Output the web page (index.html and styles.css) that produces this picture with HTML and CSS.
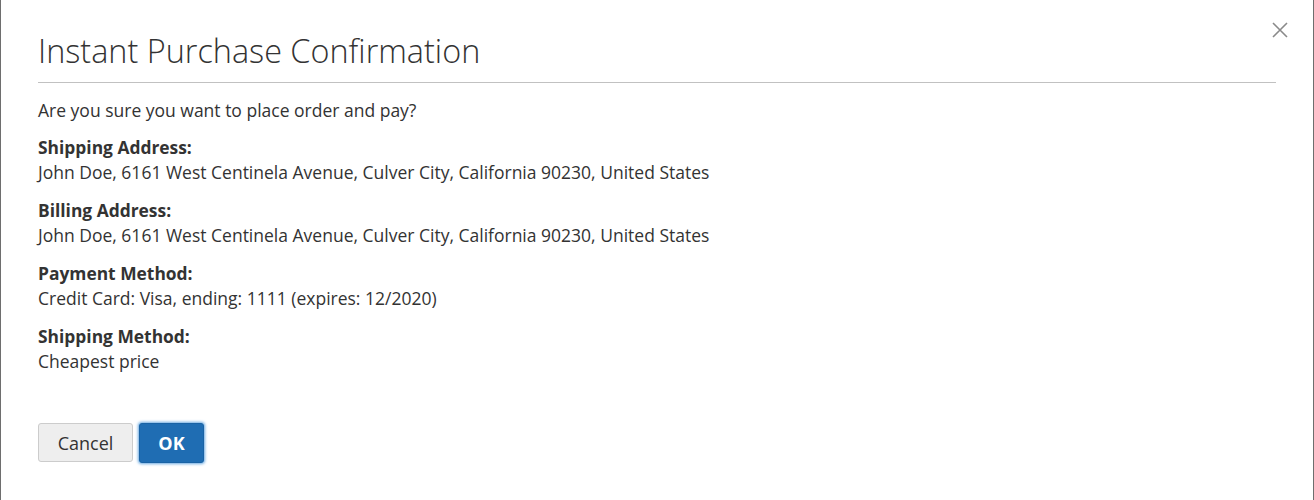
FILE: index.html
```html
<!DOCTYPE html>
<html>
<head>
<meta charset="utf-8">
<link rel="stylesheet" href="styles.css">
</head>
<body>
<div class="modal">
  <header class="modal-header">
    <h1 class="modal-title">Instant Purchase Confirmation</h1>
    <button class="close" aria-label="Close">
      <svg width="16" height="16" viewBox="0 0 16 16"><path d="M1 1L15 15M15 1L1 15" stroke="#8a8a8a" stroke-width="1.6" fill="none"/></svg>
    </button>
  </header>
  <div class="modal-content">
    <p class="intro">Are you sure you want to place order and pay?</p>
    <div class="item"><strong>Shipping Address:</strong><span>John Doe, 6161 West Centinela Avenue, Culver City, California 90230, United States</span></div>
    <div class="item"><strong>Billing Address:</strong><span>John Doe, 6161 West Centinela Avenue, Culver City, California 90230, United States</span></div>
    <div class="item"><strong>Payment Method:</strong><span>Credit Card: Visa, ending: 1111 (expires: 12/2020)</span></div>
    <div class="item"><strong>Shipping Method:</strong><span>Cheapest price</span></div>
  </div>
  <footer class="modal-footer">
    <button class="btn btn-secondary">Cancel</button>
    <button class="btn btn-primary">OK</button>
  </footer>
</div>
</body>
</html>
```
FILE: styles.css
```css
html, body {
  margin: 0;
  padding: 0;
  background: #fff;
}
body {
  font-family: "Open Sans", "Noto Sans", sans-serif;
  color: #333;
}
.modal {
  box-sizing: border-box;
  width: 1314px;
  height: 500px;
  border-left: 1px solid #6e6e6e;
  border-right: 1px solid #6e6e6e;
  padding: 0 37px;
}
.modal-header {
  position: relative;
  padding-top: 31px;
  padding-bottom: 12px;
  border-bottom: 1px solid #c1c1c1;
}
.modal-title {
  margin: 0;
  font-size: 32.4px;
  font-weight: 300;
  line-height: 39px;
  color: #333;
}
.close {
  position: absolute;
  top: 22px;
  right: -12px;
  background: none;
  border: 0;
  padding: 0;
  width: 16px;
  height: 16px;
  cursor: pointer;
}
.close svg { display: block; }
.modal-content {
  padding-top: 15px;
  font-size: 17.5px;
  line-height: 25px;
}
.intro {
  margin: 0 0 12px;
}
.item {
  display: flex;
  flex-direction: column;
  margin-bottom: 13px;
}
.item strong {
  font-weight: 700;
  font-size: 17.4px;
}
.modal-footer {
  display: flex;
  gap: 6px;
  padding-top: 36px;
}
.btn {
  font-family: "Open Sans", "Noto Sans", sans-serif;
  font-size: 18px;
  height: 39px;
  border-radius: 3px;
  padding: 0;
  cursor: pointer;
}
.btn-secondary {
  background: #eee;
  border: 1px solid #ccc;
  color: #333;
  font-weight: 400;
  width: 95px;
}
.btn-primary {
  background: #1f6db3;
  border: 1px solid #1a63a5;
  color: #fff;
  font-weight: 700;
  width: 65px;
  height: 40px;
  box-shadow: 0 0 3px 1px #68a8e0;
}
```
